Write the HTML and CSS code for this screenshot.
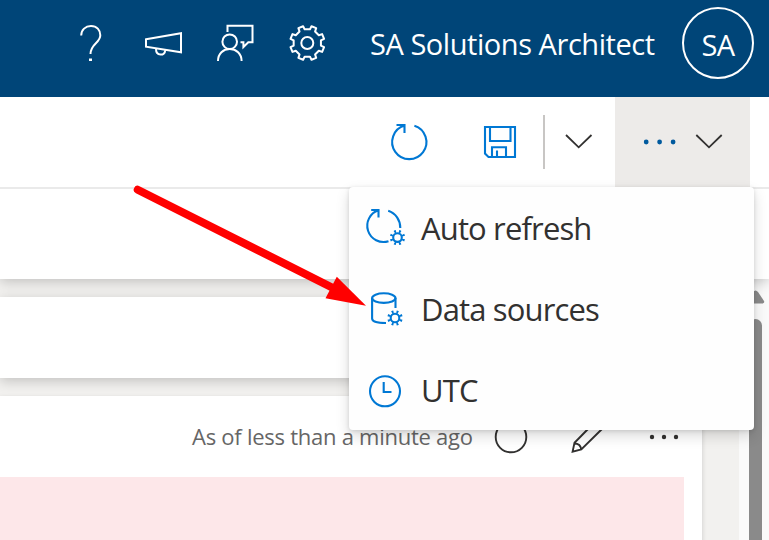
FILE: index.html
```html
<!DOCTYPE html>
<html lang="en">
<head>
<meta charset="utf-8">
<title>Dashboard</title>
<link rel="stylesheet" href="styles.css">
</head>
<body>
<header class="topbar">
  <nav class="top-icons">
    <svg class="top-icon" viewBox="71 23 40 40"><path d="M81.2 35.5C81.2 29.8 85.5 26 91 26C96.8 26 100.3 30 100.3 35.3C100.3 43 90.5 44 90.5 54"/><path d="M90.5 58.5V61" stroke-width="3"/></svg>
    <svg class="top-icon" viewBox="143 23 40 40"><path d="M146 39.3L181 33.2V52.3L146 46.7ZM156 49C156 56 165 56.5 165.2 50.2"/></svg>
    <svg class="top-icon" viewBox="215 23 40 40"><path d="M227.5 32V25.8H252.5V42.2H248.3L243.4 47V42.2H240.5M218 61C218 53.5 223.2 49 229.7 49S241.6 53.5 241.6 61"/><circle cx="229.7" cy="41.7" r="7.3"/></svg>
    <svg class="top-icon" viewBox="-20.3 -20 40 40"><circle r="6"/><path stroke-linejoin="round" d="M2.65-13.64L4.19-16.79L8.91-14.83L7.77-11.52L11.52-7.77L14.83-8.91L16.79-4.19L13.64-2.65V2.65L16.79 4.19L14.83 8.91L11.52 7.77L7.77 11.52L8.91 14.83L4.19 16.79L2.65 13.64H-2.65L-4.19 16.79L-8.91 14.83L-7.77 11.52L-11.52 7.77L-14.83 8.91L-16.79 4.19L-13.64 2.65V-2.65L-16.79-4.19L-14.83-8.91L-11.52-7.77L-7.77-11.52L-8.91-14.83L-4.19-16.79L-2.65-13.64Z"/></svg>
  </nav>
  <span class="user-name">SA Solutions Architect</span>
  <span class="avatar">SA</span>
</header>

<div class="toolbar">
  <svg class="tool-refresh" viewBox="388 120 44 44"><path d="M414.4 125.7A17.1 17.1 0 1 1 404.5 125.6M396.5 125H404.5V133"/></svg>
  <svg class="tool-save" viewBox="480 122 40 40"><path d="M485 127H515V157H488.5L485 153.5ZM490 127V141H510.5V127M492 157V147.3H506V157M497 150.5V157"/></svg>
  <span class="divider"></span>
  <svg class="tool-chevron" viewBox="564 130 30 24"><path d="M566 135L578.7 147.3L591.5 135"/></svg>
  <div class="more">
    <svg viewBox="615 97 135 90"><g class="more-dots"><circle cx="646.2" cy="142" r="2.4"/><circle cx="659.6" cy="142" r="2.4"/><circle cx="673.1" cy="142" r="2.4"/></g><path d="M696.3 135L709 147.3L721.7 135"/></svg>
  </div>

  <div class="menu">
    <div class="menu-item">
      <svg class="menu-icon" viewBox="364 206 44 44"><path d="M378.5 210.3A16.2 16.2 0 0 0 388.5 241.2M388.2 210.8C395.8 213.3 400.3 220 400.3 228M371.2 210H378.5V217.5"/><circle cx="397.5" cy="237.6" r="4.3"/><circle class="teeth" cx="397.5" cy="237.6" r="6.2" pathLength="8"/></svg>
      <span>Auto refresh</span>
    </div>
    <div class="menu-item">
      <svg class="menu-icon" viewBox="364 287 44 44"><ellipse cx="383.8" cy="298.1" rx="11.7" ry="4.8"/><path d="M372.1 298.1V318.5C372.1 321.3 377.5 323 386 323M395.5 298.1V308"/><circle cx="395" cy="318" r="4.3"/><circle class="teeth" cx="395" cy="318" r="6.2" pathLength="8"/></svg>
      <span>Data sources</span>
    </div>
    <div class="menu-item">
      <svg class="menu-icon" viewBox="364 368 44 44"><circle cx="385" cy="391.3" r="15"/><path d="M383.7 382V392H391.5"/></svg>
      <span>UTC</span>
    </div>
  </div>
</div>

<main class="page">
  <div class="band"></div>
  <div class="body-row">
    <div class="cards">
      <section class="card filter-card"></section>
      <section class="card tile">
        <div class="tile-head">
          <span class="as-of">As of less than a minute ago</span>
          <svg class="tile-icons" viewBox="490 416 194 42"><circle cx="511" cy="437" r="15.3"/><path d="M589 428L574.5 442.8L572.6 451.6L581.3 449.5L603 428M574.5 443.5Q580.5 443.5 581.3 449.5"/><g class="tile-dots"><circle cx="652" cy="437" r="2.2"/><circle cx="664" cy="437" r="2.2"/><circle cx="676" cy="437" r="2.2"/></g></svg>
        </div>
        <div class="alert"></div>
      </section>
    </div>
    <div class="scrollbar">
      <svg class="scroll-up" viewBox="745 288 20 16"><path d="M746 303L753 292Q755.5 289 758 292L764 301Q765 303.5 762 303.5H747Z"/></svg>
      <div class="thumb"></div>
    </div>
  </div>
</main>

<svg class="arrow" viewBox="130 180 240 130"><path class="shaft" d="M137.7 189.7L334 288.5"/><path class="head" d="M366 305.7L336.8 276.8L325.5 298.3Z"/></svg>
</body>
</html>
```
FILE: styles.css
```css
* { box-sizing: border-box; }
body {
  margin: 0;
  width: 769px;
  height: 540px;
  overflow: hidden;
  position: relative;
  display: flex;
  flex-direction: column;
  background: #f2f1ef;
  font-family: "Open Sans", "Noto Sans", sans-serif;
  color: #323130;
}
svg { display: block; fill: none; flex: none; }
span { white-space: nowrap; }

.topbar {
  flex: none;
  height: 97px;
  padding: 0 15px 0 71px;
  display: flex;
  align-items: flex-start;
  background: #004578;
  color: #fff;
}
.top-icons { display: flex; gap: 32px; padding-top: 23px; width: 299px; }
.top-icon { width: 40px; height: 40px; stroke: #fff; stroke-width: 2; }
.user-name {
  margin-top: 24px;
  line-height: 40px;
  font-size: 29px;
  letter-spacing: -0.45px;
}
.avatar {
  margin: 7px 0 0 auto;
  width: 72px;
  height: 72px;
  border: 2px solid #fff;
  border-radius: 50%;
  text-align: center;
  font-size: 29px;
  line-height: 71px;
  letter-spacing: -0.5px;
}

.toolbar {
  position: relative;
  z-index: 2;
  flex: none;
  height: 92px;
  padding-left: 388px;
  border-bottom: 2px solid #eaeaea;
  display: flex;
  align-items: center;
  background: #fff;
  stroke: #0078d4;
  stroke-width: 2.1;
}
.tool-refresh { width: 44px; height: 44px; }
.tool-save { width: 40px; height: 40px; margin-left: 48px; }
.divider { width: 2px; height: 54px; margin-left: 23px; background: #c8c6c4; }
.tool-chevron { width: 30px; height: 24px; margin-left: 19px; stroke: #323130; stroke-width: 1.8; }
.more { width: 135px; height: 90px; margin-left: 21px; background: #edebe9; }
.more svg { width: 135px; height: 90px; stroke: #323130; stroke-width: 1.8; }
.more-dots { fill: #005a9e; stroke: none; }

.menu {
  position: absolute;
  left: 349px;
  top: 90px;
  width: 405px;
  height: 243px;
  border-radius: 4px;
  background: #fefefe;
  box-shadow: 0 6px 14px rgba(0, 0, 0, .15), 0 1px 4px rgba(0, 0, 0, .12);
}
.menu-item {
  height: 81px;
  padding: 1px 0 0 15px;
  display: flex;
  align-items: center;
  gap: 13px;
  font-size: 31px;
  letter-spacing: -0.85px;
}
.menu-icon { width: 44px; height: 44px; }
.teeth { stroke-width: 3; stroke-dasharray: .38 .62; stroke-dashoffset: -.31; }

.page { flex: 1; min-height: 0; display: flex; flex-direction: column; }
.band {
  flex: none;
  height: 90px;
  background: #fff;
  box-shadow: 0 3px 12px rgba(0, 0, 0, .2);
  position: relative;
  z-index: 1;
}
.body-row { flex: 1; display: flex; min-height: 0; }
.cards { width: 739px; padding-top: 18px; overflow: hidden; }
.card { width: 702px; background: #fff; box-shadow: 0 3px 12px rgba(0, 0, 0, .2); }
.filter-card { height: 81px; }
.tile { height: 180px; margin-top: 18px; box-shadow: 0 2px 5px rgba(0, 0, 0, .16); }
.tile-head {
  height: 81px;
  padding-left: 192px;
  display: flex;
  align-items: center;
}
.as-of { width: 298px; margin-top: -2px; font-size: 22px; letter-spacing: -0.26px; color: #666; }
.tile-icons { width: 194px; height: 42px; stroke: #323130; stroke-width: 1.9; }
.tile-dots { fill: #323130; stroke: none; }
.alert { width: 684px; height: 99px; background: #fde7e9; }
.scrollbar { width: 30px; padding: 9px 0 0 6px; background: #fafafa; }
.scroll-up { width: 20px; height: 16px; fill: #8a8a8a; }
.thumb { width: 13px; height: 240px; margin: 15px 0 0 4px; border-radius: 7px; background: #8a8a8a; }

.arrow { position: absolute; z-index: 3; left: 130px; top: 180px; width: 240px; height: 130px; }
.shaft { stroke: #f00; stroke-width: 8; stroke-linecap: round; }
.head { fill: #f00; }
```
